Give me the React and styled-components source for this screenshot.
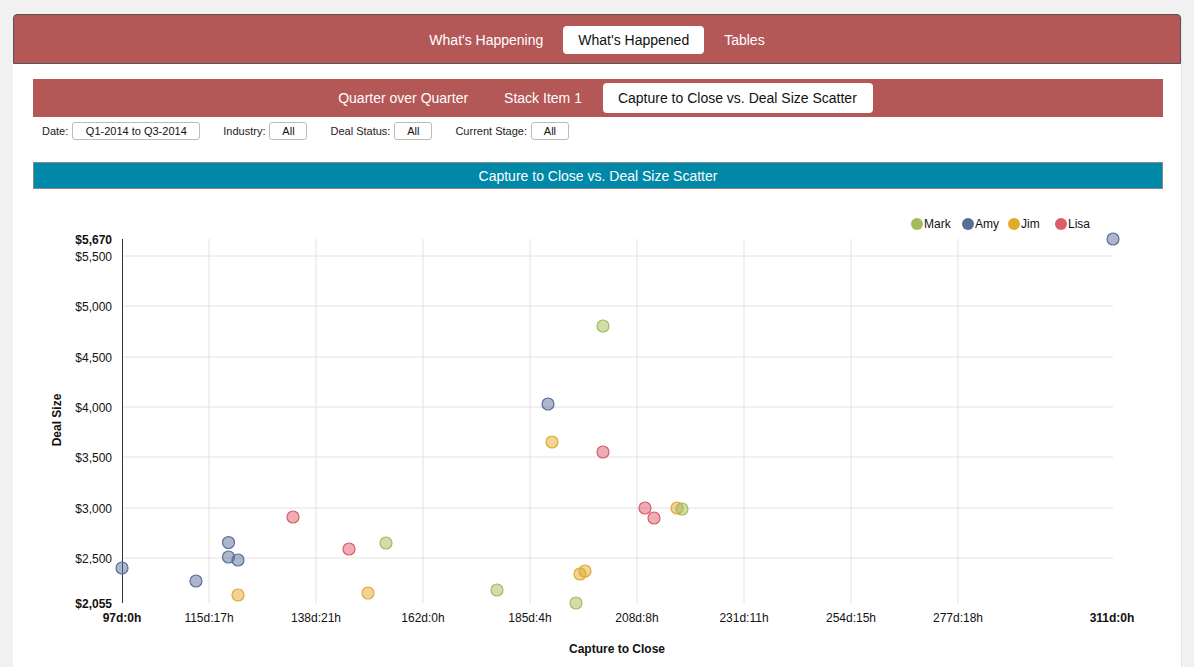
import React from 'react'
import styled, { createGlobalStyle } from 'styled-components'

const GlobalStyle = createGlobalStyle`
  html, body {
    margin: 0;
    padding: 0;
    background: #f1f1f1;
    font-family: "Liberation Sans", Arial, sans-serif;
  }
`

const COLORS = {
  Mark: '#a3bc5a',
  Amy: '#5a6f97',
  Jim: '#e0aa2c',
  Lisa: '#dc5c67',
}

const POINTS = [
  ['Amy', 122, 568], ['Amy', 196, 581], ['Amy', 228.5, 542.5], ['Amy', 228.5, 557],
  ['Amy', 238, 560], ['Amy', 548, 404], ['Amy', 1113, 239],
  ['Jim', 238, 595], ['Jim', 368, 593], ['Jim', 552, 442], ['Jim', 580, 574],
  ['Jim', 585, 571], ['Jim', 677, 508],
  ['Lisa', 293, 517], ['Lisa', 349, 549], ['Lisa', 603, 452], ['Lisa', 645, 508],
  ['Lisa', 654, 518],
  ['Mark', 386, 543], ['Mark', 497, 590], ['Mark', 576, 603], ['Mark', 603, 326],
  ['Mark', 682, 509],
]

const Y_TICKS = [
  ['$5,500', 256], ['$5,000', 306], ['$4,500', 357], ['$4,000', 407],
  ['$3,500', 457], ['$3,000', 508], ['$2,500', 558],
]

const X_TICKS = [
  ['115d:17h', 209], ['138d:21h', 316], ['162d:0h', 423], ['185d:4h', 530],
  ['208d:8h', 637], ['231d:11h', 744], ['254d:15h', 851], ['277d:18h', 958],
]

const LEGEND = [['Mark', 917], ['Amy', 968], ['Jim', 1014], ['Lisa', 1061]]

function ScatterChart() {
  return (
    <ChartSvg viewBox="33 189 1130 478" width="1130" height="478">
      {Y_TICKS.map(([label, y]) => (
        <line key={label} x1="122" x2="1113" y1={y} y2={y} stroke="#e2e2e2" strokeWidth="1" />
      ))}
      {X_TICKS.map(([label, x]) => (
        <line key={label} x1={x} x2={x} y1="239" y2="603" stroke="#e2e2e2" strokeWidth="1" />
      ))}
      <line x1="122.5" x2="122.5" y1="239" y2="603" stroke="#333" strokeWidth="1" />

      <g fontSize="12" fill="#111" textAnchor="end">
        <text x="112" y="243.5" fontWeight="bold">$5,670</text>
        {Y_TICKS.map(([label, y]) => (
          <text key={label} x="112" y={y + 4.5}>{label}</text>
        ))}
        <text x="112" y="607.5" fontWeight="bold">$2,055</text>
      </g>

      <g fontSize="12" fill="#111" textAnchor="middle">
        <text x="122" y="621.5" fontWeight="bold">97d:0h</text>
        {X_TICKS.map(([label, x]) => (
          <text key={label} x={x} y="621.5">{label}</text>
        ))}
        <text x="1112" y="621.5" fontWeight="bold">311d:0h</text>
        <text x="617" y="652.5" fontWeight="bold">Capture to Close</text>
      </g>

      <text x="61" y="420" fontSize="12" fontWeight="bold" fill="#111" textAnchor="middle"
        transform="rotate(-90 61 420)">Deal Size</text>

      <g fontSize="12" fill="#111">
        {LEGEND.map(([name, x]) => (
          <g key={name}>
            <circle cx={x} cy="224" r="6" fill={COLORS[name]} />
            <text x={x + 7} y="228">{name}</text>
          </g>
        ))}
      </g>

      {POINTS.map(([name, x, y], i) => (
        <circle key={i} cx={x} cy={y} r="6" fill={COLORS[name]} fillOpacity="0.5"
          stroke={COLORS[name]} strokeWidth="1.2" />
      ))}
    </ChartSvg>
  )
}

function App() {
  return (
    <>
      <GlobalStyle />
      <Page>
        <Card>
          <Header>
            <Tab>What's Happening</Tab>
            <Tab active>What's Happened</Tab>
            <Tab>Tables</Tab>
          </Header>

          <Body>
            <SubNav>
              <SubTab>Quarter over Quarter</SubTab>
              <SubTab>Stack Item 1</SubTab>
              <SubTab active>Capture to Close vs. Deal Size Scatter</SubTab>
            </SubNav>

            <Filters>
              <Filter>
                Date:<FilterBox wide>Q1-2014 to Q3-2014</FilterBox>
              </Filter>
              <Filter>
                Industry:<FilterBox>All</FilterBox>
              </Filter>
              <Filter>
                Deal Status:<FilterBox>All</FilterBox>
              </Filter>
              <Filter>
                Current Stage:<FilterBox>All</FilterBox>
              </Filter>
            </Filters>

            <ChartTitle>Capture to Close vs. Deal Size Scatter</ChartTitle>
            <ScatterChart />
          </Body>
        </Card>
      </Page>
    </>
  )
}

export default App


const Page = styled.div`
  padding: 14px 12px 0 13px;
  height: 653px;
  overflow: hidden;
`

const Card = styled.div`
  width: 1169px;
  background: #fff;
  border-radius: 4px 4px 0 0;
  border-right: 1px solid #e4e4e4;
  box-sizing: border-box;
  min-height: 700px;
`

const Header = styled.div`
  height: 47px;
  padding-top: 1px;
  background: #b35757;
  border: 1px solid #555;
  border-radius: 4px 4px 0 0;
  display: flex;
  align-items: center;
  justify-content: center;
  gap: 5px;
`

const Tab = styled.div`
  height: 28px;
  padding: 0 15px;
  display: flex;
  align-items: center;
  border-radius: 4px;
  font-size: 14px;
  color: ${p => (p.active ? '#111' : '#fff')};
  background: ${p => (p.active ? '#fff' : 'transparent')};
`

const Body = styled.div`
  padding: 15px 18px 0 20px;
`

const SubNav = styled.div`
  height: 38px;
  background: #b35757;
  display: flex;
  align-items: center;
  justify-content: center;
  gap: 5px;
`

const SubTab = styled.div`
  height: 30px;
  padding: 0 16px 0 15px;
  display: flex;
  align-items: center;
  border-radius: 4px;
  font-size: 14px;
  color: ${p => (p.active ? '#111' : '#fff')};
  background: ${p => (p.active ? '#fff' : 'transparent')};
`

const Filters = styled.div`
  display: flex;
  align-items: center;
  gap: 23px;
  padding: 5px 0 0 9px;
  height: 18px;
  margin-bottom: 22px;
`

const Filter = styled.div`
  display: flex;
  align-items: center;
  gap: 3px;
  font-size: 11px;
  color: #222;
`

const FilterBox = styled.div`
  height: 16px;
  min-width: ${p => (p.wide ? '126px' : '36px')};
  margin-left: 1px;
  border: 1px solid #bbb;
  border-radius: 3px;
  display: flex;
  align-items: center;
  justify-content: center;
  font-size: 11px;
  color: #111;
  background: #fff;
`

const ChartTitle = styled.div`
  height: 25px;
  background: #0088a8;
  border: 1px solid #8a8a8a;
  display: flex;
  align-items: center;
  justify-content: center;
  color: #fff;
  font-size: 14px;
`

const ChartSvg = styled.svg`
  display: block;
  font-family: "Liberation Sans", Arial, sans-serif;
`
